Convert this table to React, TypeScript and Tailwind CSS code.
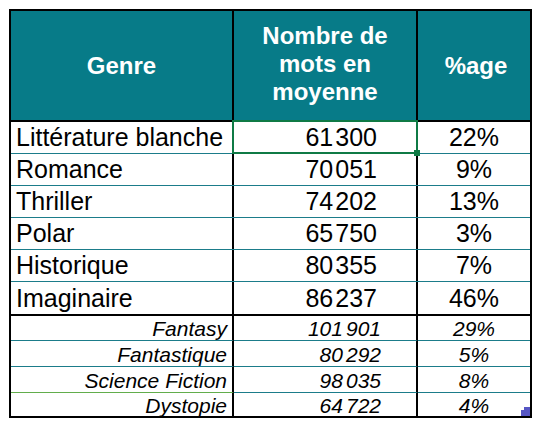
import React from "react";

const mainRows = [
  { genre: "Littérature blanche", a: "61", b: "300", pct: "22%" },
  { genre: "Romance", a: "70", b: "051", pct: "9%" },
  { genre: "Thriller", a: "74", b: "202", pct: "13%" },
  { genre: "Polar", a: "65", b: "750", pct: "3%" },
  { genre: "Historique", a: "80", b: "355", pct: "7%" },
  { genre: "Imaginaire", a: "86", b: "237", pct: "46%" },
];

const subRows = [
  { genre: "Fantasy", a: "101", b: "901", pct: "29%" },
  { genre: "Fantastique", a: "80", b: "292", pct: "5%" },
  { genre: "Science Fiction", a: "98", b: "035", pct: "8%" },
  { genre: "Dystopie", a: "64", b: "722", pct: "4%" },
];

export default function App() {
  return (
    <div className="w-[540px] h-[424px] bg-white pl-[9px] pt-[9px] font-['Liberation_Sans',Arial,sans-serif] text-black">
      <div className="w-[523px] border-2 border-black">
        {/* header */}
        <div className="flex h-[111px] bg-[#077b88] text-white font-bold text-[24px] border-b-2 border-black">
          <div className="w-[223px] border-r-2 border-black flex items-center justify-center">Genre</div>
          <div className="w-[184px] border-r-2 border-black flex items-center justify-center text-center leading-[28px] pb-[4px]">
            Nombre de
            <br />
            mots en
            <br />
            moyenne
          </div>
          <div className="flex-1 flex items-center justify-center pl-[4px]">%age</div>
        </div>

        {mainRows.map((r, i) => {
          const last = i === mainRows.length - 1;
          return (
            <div
              key={r.genre}
              className={
                last
                  ? "flex h-[34px] text-[25px] border-b-2 border-black"
                  : "flex h-[32px] text-[25px] border-b border-[#1b7c8a]"
              }
            >
              <div className="w-[223px] border-r-2 border-black flex items-center pl-[5px] pt-px">{r.genre}</div>
              <div className="relative w-[184px] border-r-2 border-black flex items-center justify-end pr-[39px] pt-px">
                {r.a}
                <span className="ml-[2px]">{r.b}</span>
                {i === 0 && (
                  <div className="absolute -left-[2px] -top-[2px] -right-[2px] -bottom-px border-2 border-[#0f7a45] z-10">
                    <div className="absolute -right-[4px] -bottom-[4px] w-[6px] h-[6px] bg-[#0f7a45]" />
                  </div>
                )}
              </div>
              <div className="flex-1 flex items-center justify-center pt-px">{r.pct}</div>
            </div>
          );
        })}

        {subRows.map((r, i) => {
          const last = i === subRows.length - 1;
          const h = last ? "h-[23px]" : i === 0 ? "h-[25px]" : "h-[26px]";
          return (
            <div key={r.genre} className={`flex ${h} text-[21px] italic`}>
              <div
                className={
                  i === 2
                    ? "w-[223px] border-r-2 border-r-black border-b border-b-[#62ad4c] flex items-center justify-end pr-[5px] pt-[2px]"
                    : last
                      ? "w-[223px] border-r-2 border-black flex items-center justify-end pr-[5px] pt-[2px]"
                      : "w-[223px] border-r-2 border-r-black border-b border-b-[#1b7c8a] flex items-center justify-end pr-[5px] pt-[2px]"
                }
              >
                {r.genre}
              </div>
              <div
                className={
                  last
                    ? "w-[184px] border-r-2 border-black flex items-center justify-end pr-[35px] pt-[2px]"
                    : "w-[184px] border-r-2 border-r-black border-b border-b-[#1b7c8a] flex items-center justify-end pr-[35px] pt-[2px]"
                }
              >
                {r.a}
                <span className="ml-[3px]">{r.b}</span>
              </div>
              <div
                className={
                  last
                    ? "relative flex-1 flex items-center justify-center pt-[2px]"
                    : "flex-1 border-b border-[#1b7c8a] flex items-center justify-center pt-[2px]"
                }
              >
                {r.pct}
                {last && (
                  <div className="absolute right-0 bottom-0 w-[9px] h-[9px]">
                    <div className="absolute right-0 bottom-0 w-[9px] h-[6px] bg-[#5656c4]" />
                    <div className="absolute right-0 top-0 w-[6px] h-[3px] bg-[#5656c4]" />
                  </div>
                )}
              </div>
            </div>
          );
        })}
      </div>
    </div>
  );
}
